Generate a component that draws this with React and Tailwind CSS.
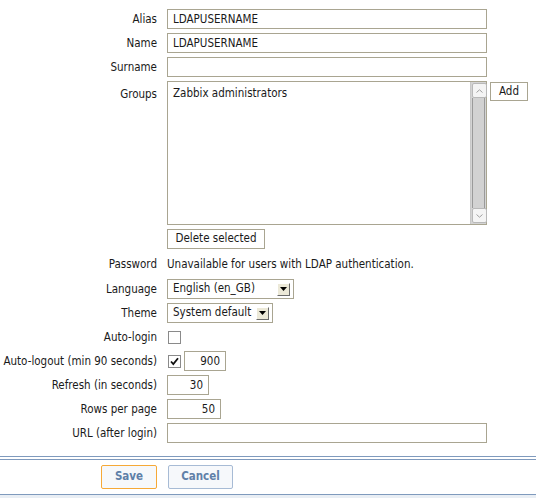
import { useState } from "react";

const field =
  "h-5 border border-[#a9a591] bg-white px-[5px] text-[11.5px] text-[#1a1a1a] outline-none";

function Row({ label, children, top = false }) {
  return (
    <div className={`flex ${top ? "items-start" : "items-center"} gap-[10px]`}>
      <div
        className={`w-[157px] shrink-0 whitespace-nowrap text-right text-[11.5px] text-[#1a1a1a] ${
          top ? "pt-[5px]" : "pt-px"
        }`}
      >
        {label}
      </div>
      <div className="flex items-center">{children}</div>
    </div>
  );
}

function DropArrow() {
  return (
    <span className="flex h-[13px] w-[13px] shrink-0 items-center justify-center border border-t-white border-l-white border-r-[#6b6b6b] border-b-[#6b6b6b] bg-[#ece9d8]">
      <svg width="7" height="4" viewBox="0 0 7 4">
        <path d="M0 0h7L3.5 4z" fill="#000" />
      </svg>
    </span>
  );
}

function FakeSelect({ value, width }) {
  return (
    <div
      className={`${field} flex items-center justify-between gap-[3px] whitespace-nowrap pr-[3px] pl-[5px] ${width}`}
    >
      <span>{value}</span>
      <DropArrow />
    </div>
  );
}

function Checkbox({ checked, onChange }) {
  return (
    <button
      type="button"
      onClick={onChange}
      className="flex h-[13px] w-[13px] items-center justify-center border border-[#8a8a8a] bg-white"
    >
      {checked && (
        <svg width="9" height="9" viewBox="0 0 9 9">
          <path
            d="M1 4.5l2.3 2.5L8 1.2"
            fill="none"
            stroke="#111"
            strokeWidth="1.8"
          />
        </svg>
      )}
    </button>
  );
}

function ScrollButton({ up }) {
  return (
    <div className="flex h-[15px] w-[15px] items-center justify-center rounded-[2px] border border-[#b8b8b8] bg-[#f4f4f4]">
      <svg width="7" height="4" viewBox="0 0 7 4">
        <path
          d={up ? "M0.5 3.5L3.5 0.8L6.5 3.5" : "M0.5 0.5L3.5 3.2L6.5 0.5"}
          fill="none"
          stroke="#a0a0a0"
          strokeWidth="1"
        />
      </svg>
    </div>
  );
}

export default function App() {
  const [autoLogin, setAutoLogin] = useState(false);
  const [autoLogout, setAutoLogout] = useState(true);

  return (
    <div className="h-[498px] w-[536px] overflow-hidden bg-white font-['DejaVu_Sans_Condensed','DejaVu_Sans',sans-serif]">
      <div className="flex flex-col gap-[4px] pt-[9px]">
        <Row label="Alias">
          <input
            className={`${field} w-[320px] border-[#7b9cc6]`}
            defaultValue="LDAPUSERNAME"
          />
        </Row>
        <Row label="Name">
          <input className={`${field} w-[320px]`} defaultValue="LDAPUSERNAME" />
        </Row>
        <Row label="Surname">
          <input className={`${field} w-[320px]`} />
        </Row>

        {/* Groups list with its own scrollbar */}
        <Row label="Groups" top>
          <div className="flex items-start gap-[3px]">
            <div className="flex flex-col gap-[4px]">
              <div className="flex h-[144px] w-[320px] border border-[#a9a591] bg-white">
                <div className="flex-1 px-[5px] pt-[3px] text-[11.5px] text-[#1a1a1a]">
                  Zabbix administrators
                </div>
                <div className="flex w-[16px] flex-col border-l border-[#c8c8c8] bg-[#d4d4d4] p-px">
                  <ScrollButton up />
                  <div className="flex-1 border-x border-[#9a9a9a] bg-[#d2d2d2]" />
                  <ScrollButton />
                </div>
              </div>
              <button
                type="button"
                className="h-[20px] w-[98px] border border-[#a9a591] bg-white text-[11.5px] text-[#1a1a1a]"
              >
                Delete selected
              </button>
            </div>
            <button
              type="button"
              className="mt-px h-[19px] w-[38px] border border-[#a9a591] bg-white text-[11.5px] text-[#1a1a1a]"
            >
              Add
            </button>
          </div>
        </Row>

        <Row label="Password">
          <span className="flex h-[22px] items-center pt-px text-[11.5px] text-[#1a1a1a]">
            Unavailable for users with LDAP authentication.
          </span>
        </Row>
        <Row label="Language">
          <FakeSelect value="English (en_GB)" width="w-[127px]" />
        </Row>
        <Row label="Theme">
          <FakeSelect value="System default" width="w-[106px]" />
        </Row>
        <Row label="Auto-login">
          <div className="flex h-5 items-center pl-px">
            <Checkbox
              checked={autoLogin}
              onChange={() => setAutoLogin(!autoLogin)}
            />
          </div>
        </Row>
        <Row label="Auto-logout (min 90 seconds)">
          <div className="flex items-center gap-[3px] pl-px">
            <Checkbox
              checked={autoLogout}
              onChange={() => setAutoLogout(!autoLogout)}
            />
            <input
              className={`${field} w-[42px] text-right`}
              defaultValue="900"
            />
          </div>
        </Row>
        <Row label="Refresh (in seconds)">
          <input className={`${field} w-[42px] text-right`} defaultValue="30" />
        </Row>
        <Row label="Rows per page">
          <input className={`${field} w-[54px] text-right`} defaultValue="50" />
        </Row>
        <Row label="URL (after login)">
          <input className={`${field} w-[320px]`} />
        </Row>
      </div>

      {/* footer with form actions */}
      <div className="mt-[13px] border-t border-[#7f9abd] pt-[2px]">
        <div className="flex h-[35px] items-center gap-[11px] border-t border-[#7f9abd] pl-[101px]">
          <button
            type="button"
            className="h-[24px] w-[56px] rounded-[2px] border border-[#f6a937] bg-[#f6f8fb] text-[11.5px] font-bold text-[#5f80a8]"
          >
            Save
          </button>
          <button
            type="button"
            className="h-[24px] w-[65px] rounded-[2px] border border-[#a7bbd5] bg-[#f6f8fb] text-[11.5px] font-bold text-[#5f80a8]"
          >
            Cancel
          </button>
        </div>
        <div className="h-[10px] border-t border-[#7f9abd] bg-[#e9eef4]" />
      </div>
    </div>
  );
}
